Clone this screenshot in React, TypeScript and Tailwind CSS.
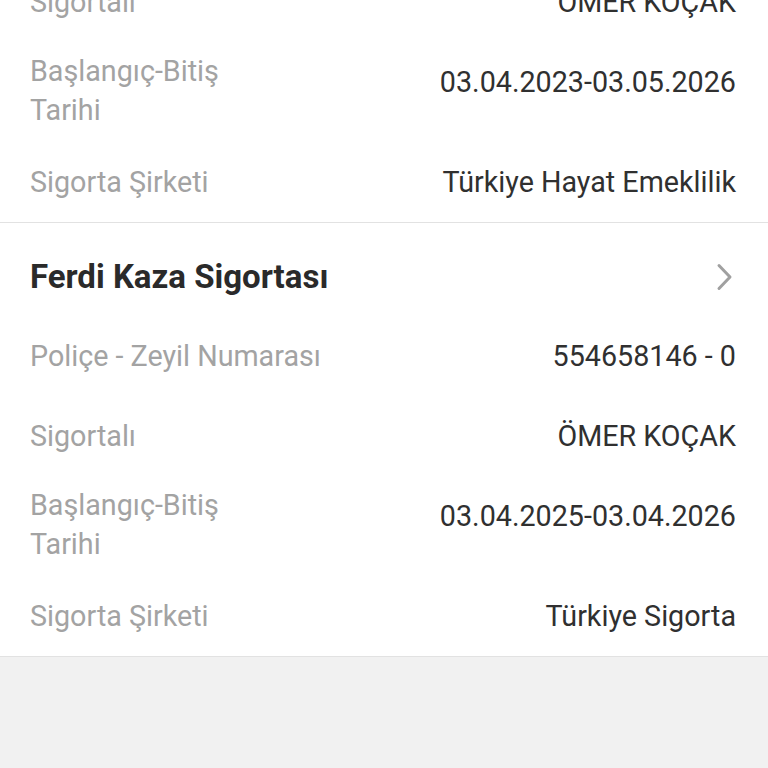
import React from "react";

function Row({ label, value }: { label: React.ReactNode; value: string }) {
  return (
    <div className="flex h-[80px] items-center justify-between pl-[30px] pr-[32px]">
      <div className="text-[28.7px] leading-[39px] text-[#a3a3a3]">{label}</div>
      <div className="text-[28.7px] leading-[39px] text-[#303030]">{value}</div>
    </div>
  );
}

function MultiRow({ value }: { value: string }) {
  return (
    <div className="flex items-start justify-between pl-[30px] pr-[32px] pt-[10px] pb-[12px]">
      <div className="text-[28.7px] leading-[39px] text-[#a3a3a3]">
        Başlangıç-Bitiş
        <br />
        Tarihi
      </div>
      <div className="mt-[11px] text-[28.7px] leading-[39px] text-[#303030]">{value}</div>
    </div>
  );
}

export default function App() {
  return (
    <div className="h-[768px] w-[768px] overflow-hidden bg-[#f1f1f1] font-[family-name:Roboto,sans-serif]">
      <div className="-mt-[38px] bg-white">
        <Row label="Sigortalı" value="ÖMER KOÇAK" />
        <MultiRow value="03.04.2023-03.05.2026" />
        <Row label="Sigorta Şirketi" value="Türkiye Hayat Emeklilik" />
      </div>
      <div className="border-t border-[#e2e2e2] bg-white">
        <div className="flex items-center justify-between pl-[30px] pr-[34px] pt-[34px] pb-[19px]">
          <div className="text-[33px] font-bold leading-[40px] text-[#2a2a2a]">Ferdi Kaza Sigortası</div>
          <svg width="18" height="28" viewBox="0 0 18 28" fill="none">
            <path d="M3 2.5 L14 14 L3 25.5" stroke="#a0a0a0" strokeWidth="3" strokeLinecap="round" strokeLinejoin="round" />
          </svg>
        </div>
        <Row label="Poliçe - Zeyil Numarası" value="554658146 - 0" />
        <Row label="Sigortalı" value="ÖMER KOÇAK" />
        <MultiRow value="03.04.2025-03.04.2026" />
        <Row label="Sigorta Şirketi" value="Türkiye Sigorta" />
      </div>
      <div className="border-t border-[#e2e2e2]" />
    </div>
  );
}
